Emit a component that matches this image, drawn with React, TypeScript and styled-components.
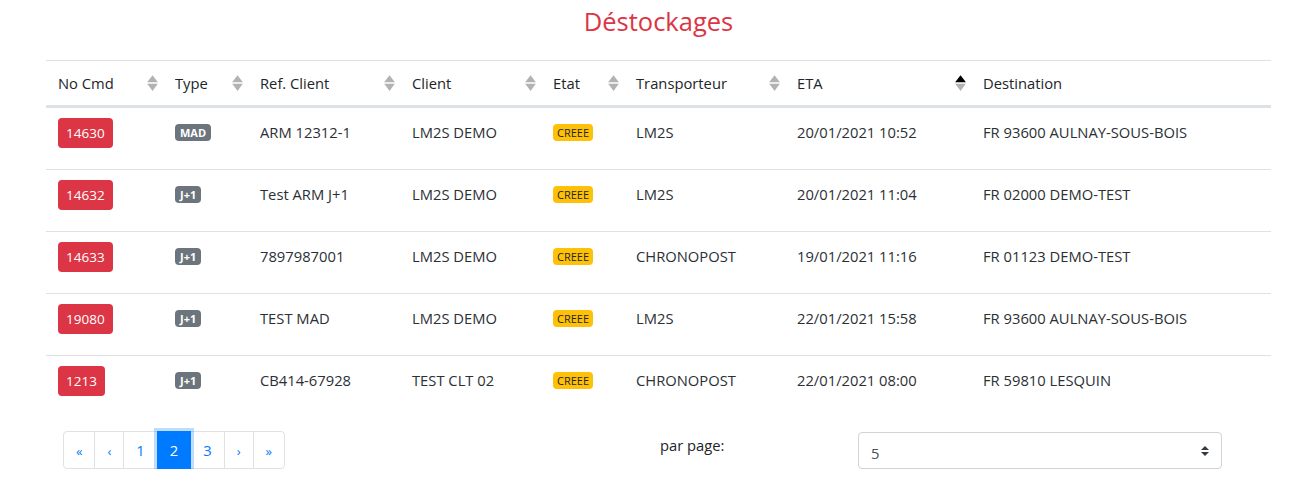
import React from "react";
import styled, { createGlobalStyle, css } from "styled-components";

const GlobalStyle = createGlobalStyle`
  html, body { margin: 0; padding: 0; background: #fff; }
  body {
    font-family: "Open Sans", "Noto Sans", "Liberation Sans", sans-serif;
    color: #212529;
    font-size: 14.75px;
  }
  * { box-sizing: border-box; }
`;

const Page = styled.div`
  width: 1225px;
  margin-left: 46px;
`;

const Title = styled.h3`
  margin: 0;
  padding-top: 4px;
  height: 38px;
  line-height: 34px;
  text-align: center;
  color: #dc3545;
  font-size: 25.5px;
  font-weight: 500;
`;

const Table = styled.table`
  margin-top: 22px;
  width: 1225px;
  table-layout: fixed;
  border-collapse: separate;
  border-spacing: 0;
`;

const Th = styled.th<{ $w: number }>`
  width: ${(p) => p.$w}px;
  padding: 10px 5px 10px 12px;
  line-height: 24px;
  height: 47px;
  text-align: left;
  font-weight: 500;
  color: #212529;
  border-top: 1px solid #dee2e6;
  border-bottom: 2px solid #dee2e6;
  vertical-align: top;
`;

const HeadInner = styled.div`
  display: flex;
  align-items: center;
  justify-content: space-between;
  height: 24px;
`;

const Td = styled.td`
  padding: 12px;
  height: 62px;
  line-height: 24px;
  border-top: 1px solid #dee2e6;
  vertical-align: top;
  white-space: nowrap;
  color: #2b3035;
`;

const IdBadge = styled.span`
  display: inline-block;
  vertical-align: top;
  margin-top: -2px;
  height: 30px;
  line-height: 30px;
  padding: 0 8px;
  border-radius: 4px;
  background: #dc3545;
  color: #fff;
  font-size: 13.5px;
`;

const SmallBadge = styled.span<{ $variant: "secondary" | "warning" }>`
  display: inline-block;
  vertical-align: top;
  margin-top: 4px;
  height: 17px;
  line-height: 17px;
  border-radius: 4px;
  font-size: 11px;
  ${(p) =>
    p.$variant === "secondary"
      ? css`
          background: #6c757d;
          color: #fff;
          font-weight: 700;
          padding: 0 5px;
        `
      : css`
          background: #ffc107;
          color: #212529;
          font-weight: 400;
          padding: 0 4px;
        `}
`;

const Footer = styled.div`
  margin-top: 14px;
  padding-left: 17px;
  display: grid;
  grid-template-columns: 597px 198px 364px;
  align-items: start;
`;

const Pager = styled.ul`
  display: flex;
  list-style: none;
  margin: 0;
  padding: 0;
`;

const PageLink = styled.li<{ $active?: boolean; $first?: boolean; $last?: boolean }>`
  position: relative;
  height: 38px;
  line-height: 36px;
  padding: 0 12px;
  margin-left: -1px;
  border: 1px solid #dee2e6;
  color: #007bff;
  font-size: 14.75px;
  background: #fff;
  cursor: pointer;
  ${(p) => p.$first && css`margin-left: 0; border-radius: 4px 0 0 4px;`}
  ${(p) => p.$last && css`border-radius: 0 4px 4px 0;`}
  ${(p) =>
    p.$active &&
    css`
      z-index: 2;
      background: #007bff;
      border-color: #007bff;
      color: #fff;
      box-shadow: 0 0 0 3px rgba(0, 123, 255, 0.25);
    `}
`;

const Glyph = styled.span`
  font-size: 13px;
`;

const PerPageLabel = styled.div`
  margin-top: 2px;
  line-height: 24px;
  color: #212529;
`;

const SelectWrap = styled.div`
  position: relative;
  margin-top: 1px;
`;

const Select = styled.select`
  appearance: none;
  -webkit-appearance: none;
  width: 364px;
  height: 37px;
  padding: 4px 28px 0 12px;
  border: 1px solid #ced4da;
  border-radius: 4px;
  background: #fff;
  color: #495057;
  font-family: inherit;
  font-size: 14.75px;
  outline: none;
`;

const SelectArrow = styled.svg`
  position: absolute;
  right: 13px;
  top: 14px;
  pointer-events: none;
`;

type SortState = "none" | "asc";

const SortIcon: React.FC<{ state: SortState }> = ({ state }) => (
  <svg width="11" height="16" viewBox="0 0 101 101" preserveAspectRatio="none">
    <path d="M51 1l25 23 24 22H1l25-22z" fill="#000" opacity={state === "asc" ? 1 : 0.3} />
    <path d="M51 101l25-23 24-22H1l25 22z" fill="#000" opacity={0.3} />
  </svg>
);

const columns: { label: string; w: number; sort?: SortState }[] = [
  { label: "No Cmd", w: 117, sort: "none" },
  { label: "Type", w: 85, sort: "none" },
  { label: "Ref. Client", w: 152, sort: "none" },
  { label: "Client", w: 141, sort: "none" },
  { label: "Etat", w: 83, sort: "none" },
  { label: "Transporteur", w: 161, sort: "none" },
  { label: "ETA", w: 186, sort: "asc" },
  { label: "Destination", w: 300 },
];

const rows = [
  { id: "14630", type: "MAD", ref: "ARM 12312-1", client: "LM2S DEMO", etat: "CREEE", trans: "LM2S", eta: "20/01/2021 10:52", dest: "FR 93600 AULNAY-SOUS-BOIS" },
  { id: "14632", type: "J+1", ref: "Test ARM J+1", client: "LM2S DEMO", etat: "CREEE", trans: "LM2S", eta: "20/01/2021 11:04", dest: "FR 02000 DEMO-TEST" },
  { id: "14633", type: "J+1", ref: "7897987001", client: "LM2S DEMO", etat: "CREEE", trans: "CHRONOPOST", eta: "19/01/2021 11:16", dest: "FR 01123 DEMO-TEST" },
  { id: "19080", type: "J+1", ref: "TEST MAD", client: "LM2S DEMO", etat: "CREEE", trans: "LM2S", eta: "22/01/2021 15:58", dest: "FR 93600 AULNAY-SOUS-BOIS" },
  { id: "1213", type: "J+1", ref: "CB414-67928", client: "TEST CLT 02", etat: "CREEE", trans: "CHRONOPOST", eta: "22/01/2021 08:00", dest: "FR 59810 LESQUIN" },
];

const pages = [
  { label: "«", glyph: true },
  { label: "‹", glyph: true },
  { label: "1" },
  { label: "2", active: true },
  { label: "3" },
  { label: "›", glyph: true },
  { label: "»", glyph: true },
];

export default function App() {
  return (
    <>
      <GlobalStyle />
      <Page>
        <Title>Déstockages</Title>
        <Table>
          <thead>
            <tr>
              {columns.map((c) => (
                <Th key={c.label} $w={c.w}>
                  <HeadInner>
                    <span>{c.label}</span>
                    {c.sort && <SortIcon state={c.sort} />}
                  </HeadInner>
                </Th>
              ))}
            </tr>
          </thead>
          <tbody>
            {rows.map((r) => (
              <tr key={r.id}>
                <Td>
                  <IdBadge>{r.id}</IdBadge>
                </Td>
                <Td>
                  <SmallBadge $variant="secondary">{r.type}</SmallBadge>
                </Td>
                <Td>{r.ref}</Td>
                <Td>{r.client}</Td>
                <Td>
                  <SmallBadge $variant="warning">{r.etat}</SmallBadge>
                </Td>
                <Td>{r.trans}</Td>
                <Td>{r.eta}</Td>
                <Td>{r.dest}</Td>
              </tr>
            ))}
          </tbody>
        </Table>
        <Footer>
          <Pager>
            {pages.map((p, i) => (
              <PageLink key={i} $active={p.active} $first={i === 0} $last={i === pages.length - 1}>
                {p.glyph ? <Glyph>{p.label}</Glyph> : p.label}
              </PageLink>
            ))}
          </Pager>
          <PerPageLabel>par page:</PerPageLabel>
          <SelectWrap>
            <Select defaultValue="5">
              <option value="5">5</option>
              <option value="10">10</option>
              <option value="20">20</option>
            </Select>
            <SelectArrow width="8" height="10" viewBox="0 0 4 5">
              <path d="M2 0L0 2h4zm0 5L0 3h4z" fill="#343a40" />
            </SelectArrow>
          </SelectWrap>
        </Footer>
      </Page>
    </>
  );
}
